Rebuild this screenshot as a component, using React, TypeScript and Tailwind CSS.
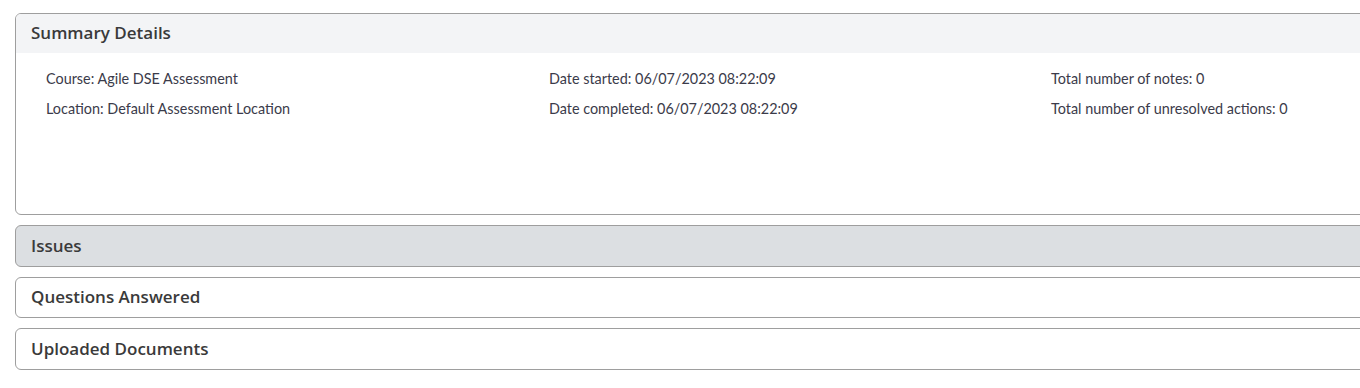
import React from "react";

const font = { fontFamily: "Lato, 'Noto Sans', sans-serif" };
const titleFont = { fontFamily: "'Open Sans', 'Noto Sans', sans-serif" };

function Panel({ title, bg, h }: { title: string; bg: string; h: string }) {
  return (
    <div className={`w-[1540px] border border-[#9e9e9e] rounded-[6px] overflow-hidden ${bg}`}>
      <div className={`${h} flex items-center pl-[15px] pb-[1px] text-[17px] font-semibold text-[#3a3a3a]`} style={titleFont}>
        {title}
      </div>
    </div>
  );
}

export default function App() {
  return (
    <div className="w-[1360px] h-[388px] overflow-hidden bg-white" style={font}>
      <div className="pt-[13px] pl-[15px] flex flex-col gap-[10px]">
        <div className="w-[1540px] h-[202px] border border-[#9e9e9e] rounded-[6px] overflow-hidden bg-white">
          <div
            className="h-[39px] bg-[#f3f4f6] flex items-center pl-[15px] pb-[1px] text-[17px] font-semibold text-[#3a3a3a]"
            style={titleFont}
          >
            Summary Details
          </div>
          <div className="grid grid-cols-[503px_502px_503px] pl-[30px] pt-[16px] text-[14.4px] text-[#3b3b4a] leading-[20px] gap-y-[10px]">
            <div>Course: Agile DSE Assessment</div>
            <div>Date started: 06/07/2023 08:22:09</div>
            <div>Total number of notes: 0</div>
            <div>Location: Default Assessment Location</div>
            <div>Date completed: 06/07/2023 08:22:09</div>
            <div>Total number of unresolved actions: 0</div>
          </div>
        </div>
        <Panel title="Issues" bg="bg-[#dcdfe2]" h="h-[40px]" />
        <Panel title="Questions Answered" bg="bg-white" h="h-[39px]" />
        <Panel title="Uploaded Documents" bg="bg-white" h="h-[40px]" />
      </div>
    </div>
  );
}
